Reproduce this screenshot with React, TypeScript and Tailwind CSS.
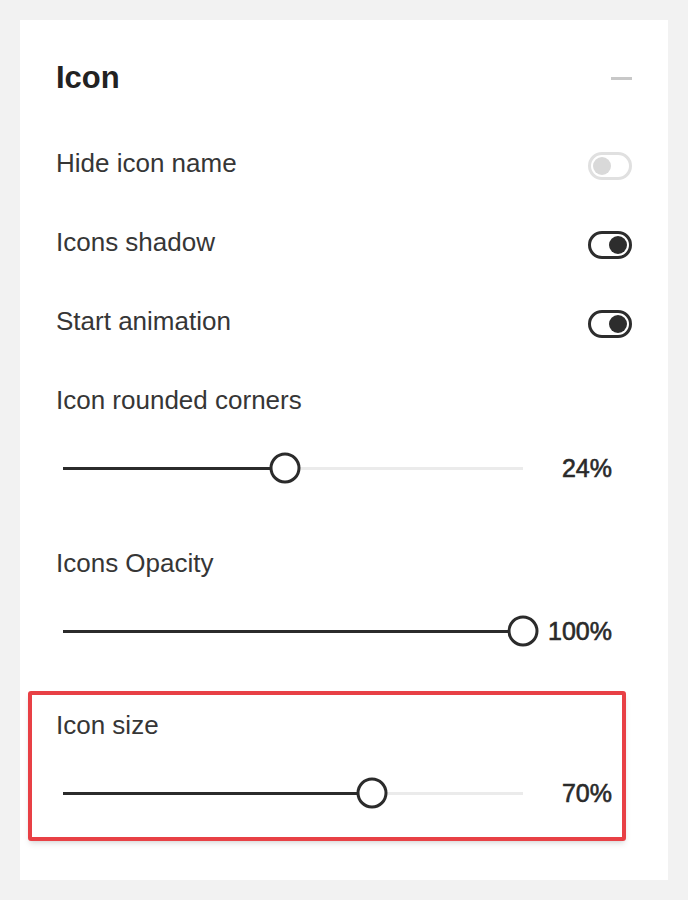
import React from 'react';

const font = { fontFamily: '"Liberation Sans", Arial, sans-serif' };

const Toggle = ({ on, disabled }: { on?: boolean; disabled?: boolean }) => (
  <div
    className={`w-[44px] h-[28px] rounded-full border-[3px] flex items-center px-[2px] ${
      disabled ? 'border-[#e0e0e0] justify-start' : 'border-[#2d2d2d]'
    } ${on ? 'justify-end' : 'justify-start'}`}
  >
    <div className={`w-[18px] h-[18px] rounded-full ${disabled ? 'bg-[#d9d9d9]' : 'bg-[#2d2d2d]'}`} />
  </div>
);

const ToggleRow = ({ label, on, disabled }: { label: string; on?: boolean; disabled?: boolean }) => (
  <div className="h-[79px] flex items-center justify-between">
    <span className="text-[26px] text-[#363636] leading-[30px] mb-[6px]">{label}</span>
    <Toggle on={on} disabled={disabled} />
  </div>
);

const Slider = ({ fraction, value }: { fraction: number; value: string }) => (
  <div className="h-[40px] flex items-center">
    <div className="ml-[7px] w-[460px] h-[3px] bg-[#ebebeb] relative">
      <div className="absolute left-0 top-0 h-[3px] bg-[#2b2b2b]" style={{ width: `${fraction * 100}%` }} />
      <div
        className="absolute top-1/2 -translate-x-1/2 -translate-y-1/2 w-[31px] h-[31px] rounded-full bg-white border-[3px] border-[#2b2b2b]"
        style={{ left: `${fraction * 100}%` }}
      />
    </div>
    <div className="flex-1 text-right pr-[20px] text-[25px] text-[#2a2a2a] pt-[2px] [-webkit-text-stroke:0.6px_#2a2a2a]">
      {value}
    </div>
  </div>
);

const SliderSection = ({
  label,
  fraction,
  value,
  className,
  children,
}: {
  label: string;
  fraction: number;
  value: string;
  className?: string;
  children?: React.ReactNode;
}) => (
  <div className={`relative ${className ?? ''}`}>
    {children}
    <div className="h-[30px] flex items-center text-[26px] text-[#363636]">{label}</div>
    <div className="mt-[33px]">
      <Slider fraction={fraction} value={value} />
    </div>
  </div>
);

export default function App() {
  return (
    <div className="w-[688px] h-[900px] bg-[#f2f2f2] pt-[20px]" style={font}>
      <div className="ml-[20px] w-[648px] h-[860px] bg-white px-[36px] pt-[38px]">
        <div className="h-[40px] flex items-center justify-between">
          <h2 className="text-[31px] font-bold text-[#222]">Icon</h2>
          <div className="w-[21px] h-[3px] bg-[#c8c8c8]" />
        </div>

        <div className="mt-[28px]">
          <ToggleRow label="Hide icon name" disabled />
          <ToggleRow label="Icons shadow" on />
          <ToggleRow label="Start animation" on />
        </div>

        <SliderSection label="Icon rounded corners" fraction={0.483} value="24%" className="mt-[22px]" />
        <SliderSection label="Icons Opacity" fraction={1} value="100%" className="mt-[60px]" />
        <SliderSection label="Icon size" fraction={0.672} value="70%" className="mt-[59px]">
          <div className="absolute left-[-28px] right-[6px] top-[-19px] bottom-[-28px] border-[4px] border-[#e84045] rounded-[3px] shadow-md pointer-events-none" />
        </SliderSection>
      </div>
    </div>
  );
}
